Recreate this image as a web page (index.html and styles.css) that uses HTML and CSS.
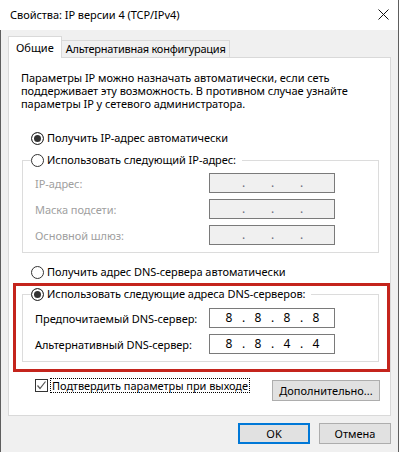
FILE: index.html
```html
<!DOCTYPE html>
<html lang="ru">
<head>
    <meta charset="utf-8">
    <title>Свойства: IP версии 4 (TCP/IPv4)</title>
    <link rel="stylesheet" href="styles.css">
</head>
<body>
    <div class="window">
        <header class="titlebar">
            <span class="title">Свойства: IP версии 4 (TCP/IPv4)</span>
            <svg class="close" width="11" height="11" viewBox="0 0 11 11">
                <path d="M0.5 0.5 L10.5 10.5 M10.5 0.5 L0.5 10.5" stroke="#111" stroke-width="1" fill="none"/>
            </svg>
        </header>

        <div class="client">
            <nav class="tabs">
                <span class="tab active">Общие</span>
                <span class="tab">Альтернативная конфигурация</span>
            </nav>

            <section class="panel">
                <div class="intro">
                    <span class="intro-line">Параметры IP можно назначать автоматически, если сеть</span>
                    <span class="intro-line">поддерживает эту возможность. В противном случае узнайте</span>
                    <span class="intro-line">параметры IP у сетевого администратора.</span>
                </div>

                <div class="option ip-auto"><span class="radio checked"></span>Получить IP-адрес автоматически</div>

                <fieldset class="group">
                    <legend class="option"><span class="radio"></span>Использовать следующий IP-адрес:</legend>
                    <div class="field disabled">
                        <span class="field-label">IP-адрес:</span>
                        <span class="ip"><span class="oct"></span><span class="dot">.</span><span class="oct"></span><span class="dot">.</span><span class="oct"></span><span class="dot">.</span><span class="oct"></span></span>
                    </div>
                    <div class="field disabled">
                        <span class="field-label">Маска подсети:</span>
                        <span class="ip"><span class="oct"></span><span class="dot">.</span><span class="oct"></span><span class="dot">.</span><span class="oct"></span><span class="dot">.</span><span class="oct"></span></span>
                    </div>
                    <div class="field disabled">
                        <span class="field-label">Основной шлюз:</span>
                        <span class="ip"><span class="oct"></span><span class="dot">.</span><span class="oct"></span><span class="dot">.</span><span class="oct"></span><span class="dot">.</span><span class="oct"></span></span>
                    </div>
                </fieldset>

                <div class="option dns-auto"><span class="radio"></span>Получить адрес DNS-сервера автоматически</div>

                <div class="highlight">
                    <fieldset class="group dns">
                        <legend class="option"><span class="radio checked"></span>Использовать следующие адреса DNS-серверов:</legend>
                        <div class="field">
                            <span class="field-label">Предпочитаемый DNS-сервер:</span>
                            <span class="ip"><span class="oct">8</span><span class="dot">.</span><span class="oct">8</span><span class="dot">.</span><span class="oct">8</span><span class="dot">.</span><span class="oct">8</span></span>
                        </div>
                        <div class="field">
                            <span class="field-label">Альтернативный DNS-сервер:</span>
                            <span class="ip"><span class="oct">8</span><span class="dot">.</span><span class="oct">8</span><span class="dot">.</span><span class="oct">4</span><span class="dot">.</span><span class="oct">4</span></span>
                        </div>
                    </fieldset>
                </div>

                <div class="footer-row">
                    <label class="check">
                        <span class="checkbox">
                            <svg width="11" height="11" viewBox="0 0 11 11"><path d="M1.5 5.5 L4 8.5 L9.5 1.5" stroke="#555" stroke-width="1.2" fill="none"/></svg>
                        </span>
                        <span class="focus">Подтвердить параметры при выходе</span>
                    </label>
                    <button class="btn advanced">Дополнительно...</button>
                </div>
            </section>

            <div class="dialog-buttons">
                <button class="btn default">OK</button>
                <button class="btn">Отмена</button>
            </div>
        </div>
    </div>
</body>
</html>
```

FILE: styles.css
```css
* {
    margin: 0;
    padding: 0;
    box-sizing: border-box;
}

body {
    font-family: 'Noto Sans', 'Open Sans', sans-serif;
    font-size: 11px;
    letter-spacing: -0.05px;
    color: #000;
    background: #fff;
}

.window {
    width: 399px;
    height: 452px;
    border-right: 1px solid #5e5e5e;
    background: #f0f0f0;
    overflow: hidden;
}

.titlebar {
    height: 30px;
    background: #fff;
    display: flex;
    align-items: center;
    justify-content: space-between;
    padding: 0 9px 0 10px;
}

.title {
    font-size: 11px;
    line-height: 14px;
}

.close {
    display: block;
    margin-top: -1px;
}

.client {
    height: 422px;
    border-left: 1px solid #5e5e5e;
}

/* tabs */
.tabs {
    display: flex;
    align-items: flex-end;
    height: 27px;
    padding: 6px 0 0 7px;
}

.tab {
    height: 17px;
    line-height: 15px;
    padding: 0 4px 0 4px;
    border: 1px solid #d9d9d9;
    border-bottom: none;
    border-left: none;
    background: #f0f0f0;
    letter-spacing: -0.25px;
    white-space: nowrap;
}

.tab.active {
    position: relative;
    z-index: 1;
    height: 22px;
    margin-bottom: -1px;
    line-height: 21px;
    padding: 0 7px;
    border-left: 1px solid #d9d9d9;
    background: #fff;
    letter-spacing: 0;
}

/* panel */
.panel {
    width: 383px;
    height: 359px;
    margin-left: 7px;
    background: #fff;
    border: 1px solid #d9d9d9;
}

.intro {
    display: flex;
    flex-direction: column;
    margin: 13px 0 0 12px;
    white-space: nowrap;
}

.intro-line {
    height: 13px;
    line-height: 13px;
}

.option {
    display: flex;
    align-items: center;
    height: 14px;
    line-height: 14px;
    white-space: nowrap;
}

.radio {
    width: 13px;
    height: 13px;
    margin-right: 3px;
    border: 1px solid #333;
    border-radius: 50%;
    background: #fff;
    flex: none;
}

.radio.checked {
    background: #333;
    box-shadow: inset 0 0 0 2px #fff;
}

.ip-auto {
    margin: 21px 0 0 22px;
}

.dns-auto {
    margin: 12px 0 0 22px;
}

.group {
    width: 357px;
    margin: 8px 0 0 13px;
    padding: 6px 0 7px 8px;
    border: 1px solid #dcdcdc;
}

.group legend {
    padding: 0 6px 0 0;
}

.group.dns {
    margin: 0;
    padding-top: 7px;
}

.field {
    display: flex;
    align-items: center;
    height: 20px;
    margin-top: 6px;
}

.field:first-of-type {
    margin-top: 0;
}

.field-label {
    width: 174px;
    margin-left: 4px;
    white-space: nowrap;
}

.field.disabled .field-label {
    color: #a0a0a0;
}

.ip {
    display: flex;
    width: 126px;
    height: 20px;
    padding-left: 8px;
    border: 1px solid #7a7a7a;
    background: #fff;
    line-height: 17px;
    font-size: 12px;
}

.field.disabled .ip {
    background: #f0f0f0;
    color: #6d6d7d;
}

.oct {
    width: 22px;
    text-align: center;
}

.dot {
    width: 7px;
    text-align: center;
}

.highlight {
    width: 377px;
    margin: 4px 0 0 4px;
    padding: 1px 8px 7px 6px;
    border: 3px solid #c4241c;
}

/* bottom of the panel */
.footer-row {
    display: flex;
    align-items: flex-start;
    margin: 6px 10px 0 26px;
}

.check {
    display: flex;
    align-items: flex-start;
}

.checkbox {
    width: 13px;
    height: 13px;
    margin: 1px 2px 0 0;
    border: 1px solid #333;
    background: #fff;
}

.checkbox svg {
    display: block;
}

.focus {
    height: 15px;
    line-height: 13px;
    padding: 0 1px;
    border: 1px dotted #000;
    white-space: nowrap;
}

.btn {
    font: inherit;
    color: #000;
    height: 21px;
    background: #e1e1e1;
    border: 1px solid #adadad;
}

.advanced {
    width: 108px;
    margin: 2px 0 0 auto;
}

.dialog-buttons {
    display: flex;
    justify-content: flex-end;
    gap: 9px;
    margin-top: 7px;
    padding-right: 7px;
}

.dialog-buttons .btn {
    width: 72px;
}

.btn.default {
    border: 2px solid #0078d7;
}
```
